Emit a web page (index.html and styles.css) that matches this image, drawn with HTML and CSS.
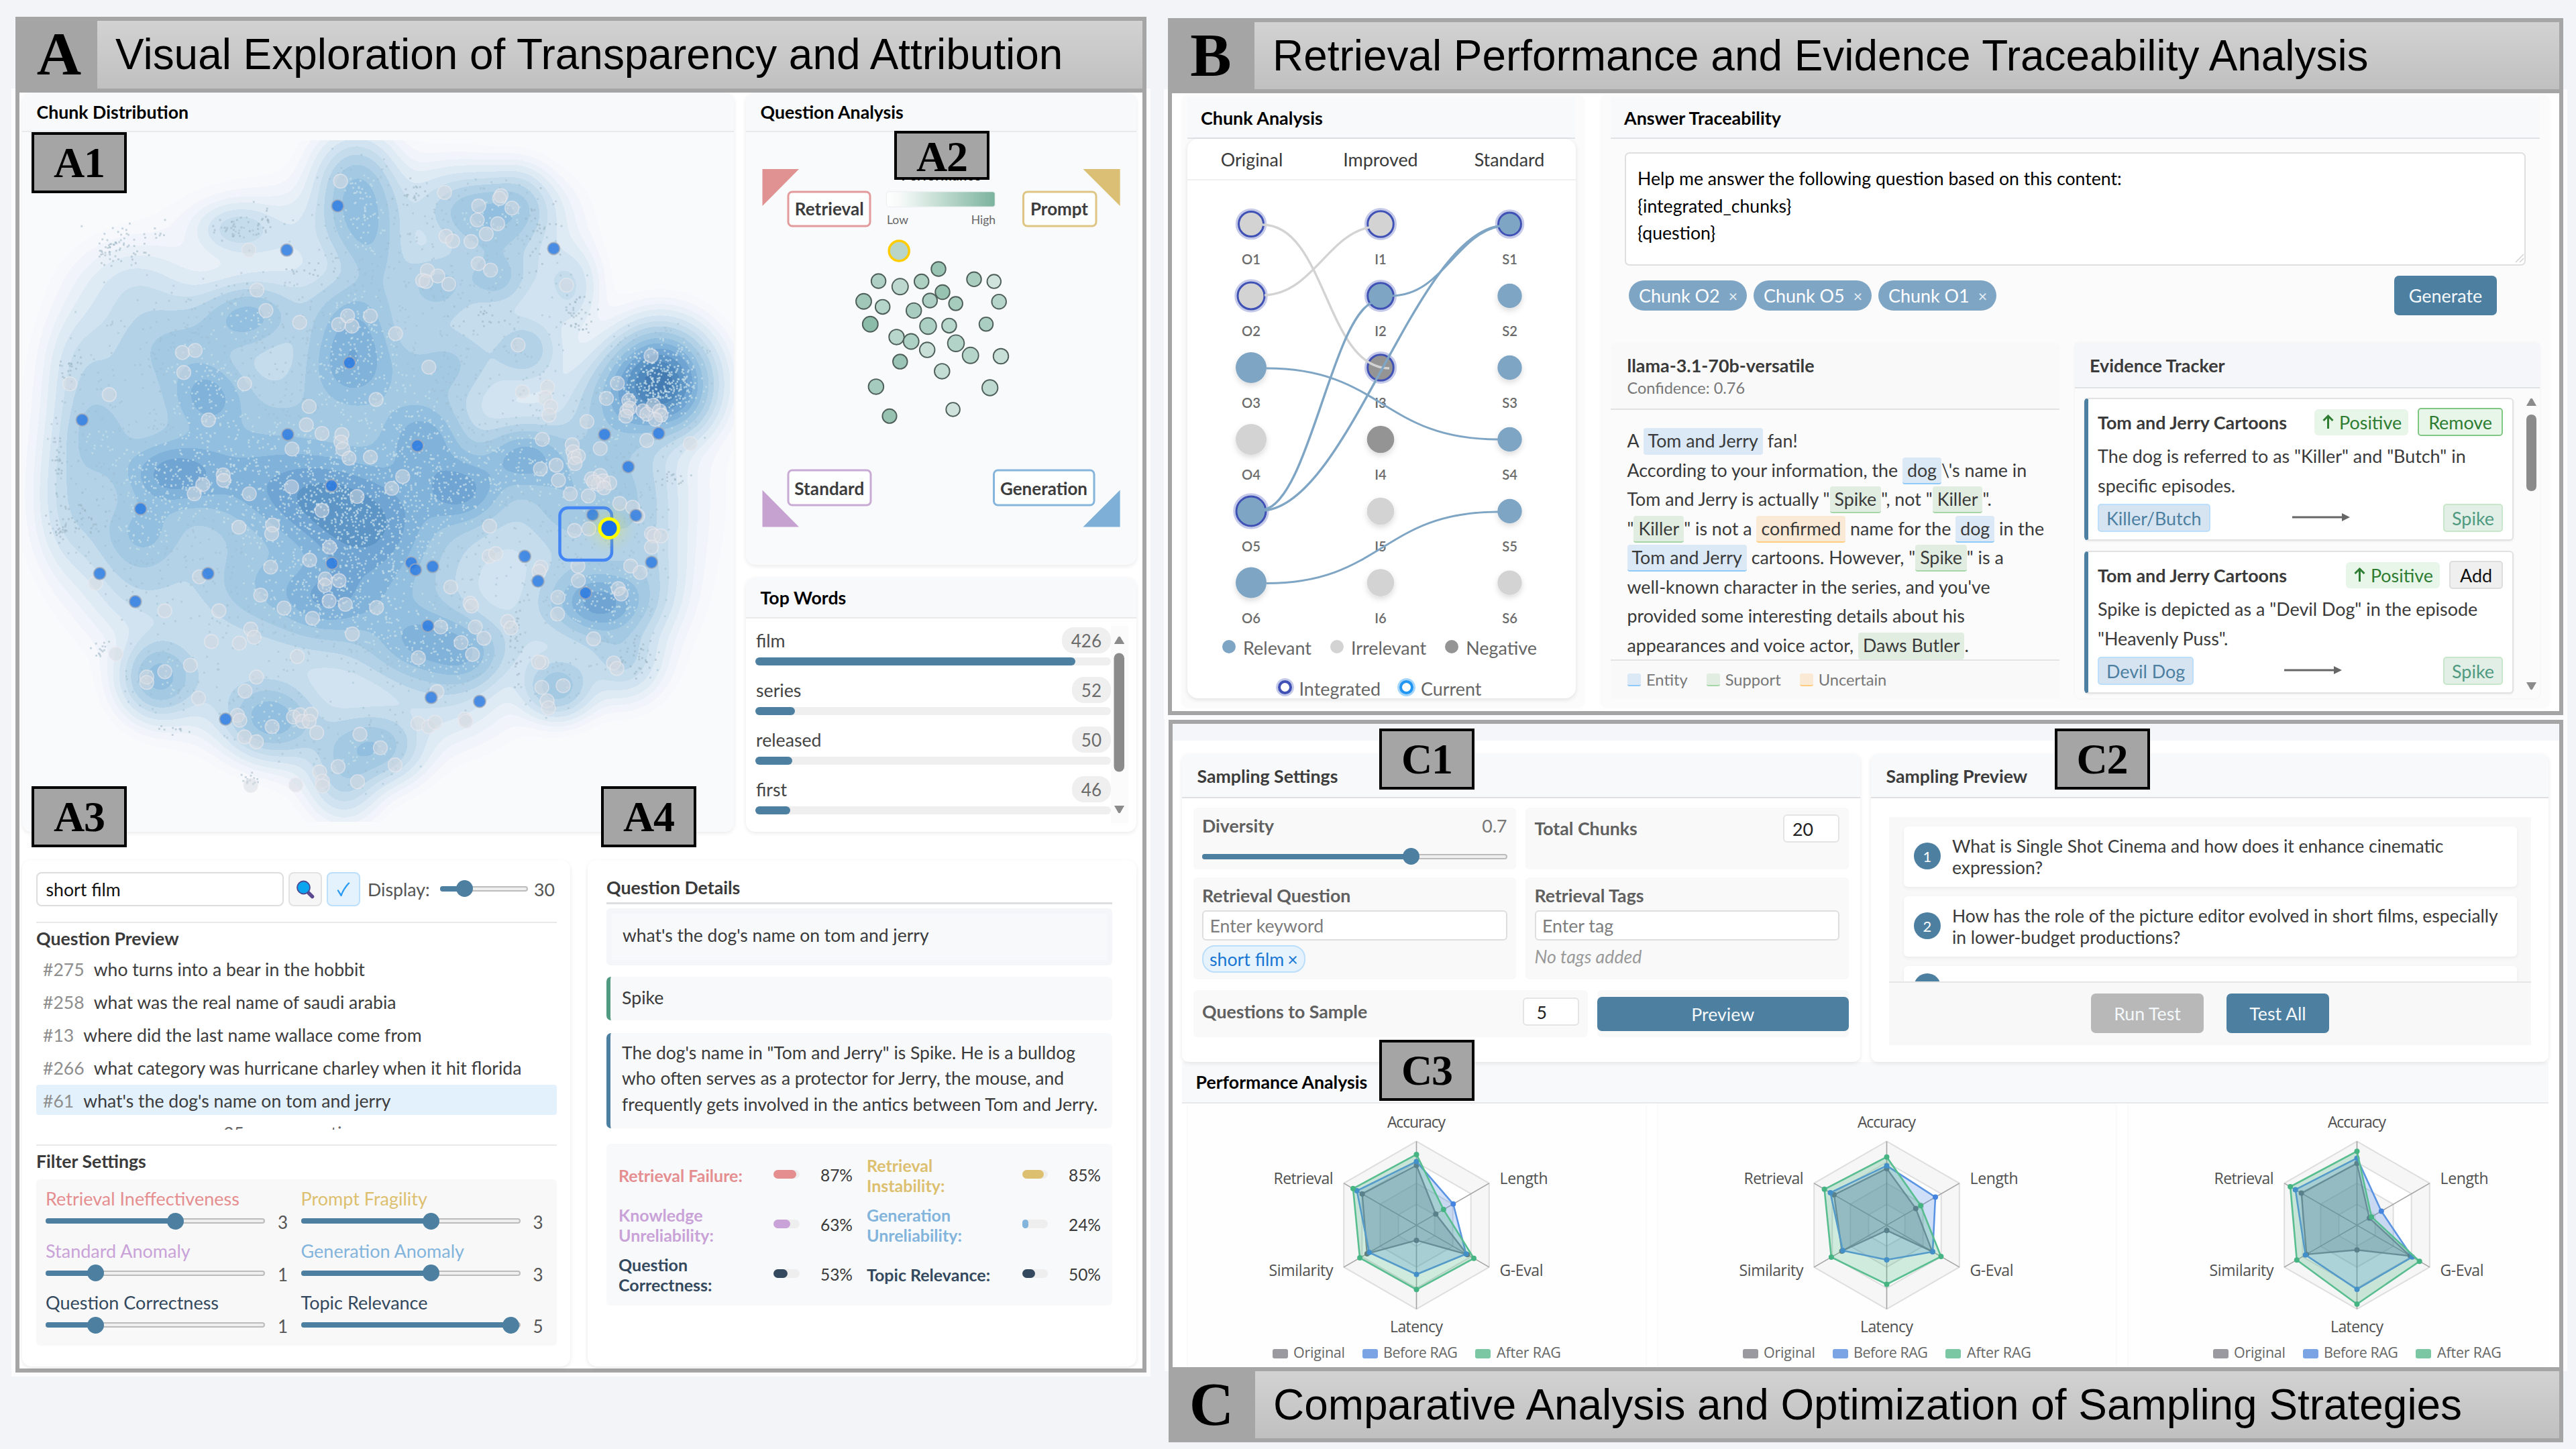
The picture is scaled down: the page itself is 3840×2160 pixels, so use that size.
FILE: index.html
```html
<!DOCTYPE html>
<html lang="en">
<head>
<meta charset="utf-8">
<title>RAG Visual Analytics</title>
<link rel="stylesheet" href="styles.css">
</head>
<body>
<main class="page">

<section class="panel panel-a">
  <header class="bar"><div class="bar-letter">A</div><h1 class="bar-title">Visual Exploration of Transparency and Attribution</h1></header>
  <div class="panel-body a-body">
    <div class="a-top">
      <div class="card chunk-card">
        <h2 class="card-head">Chunk Distribution</h2>
        <canvas id="density" class="density" width="1061" height="1043"></canvas>
      </div>
      <div class="a-side">
        <div class="card qa-card">
          <h2 class="card-head">Question Analysis</h2>
          <svg class="qa-plot" viewBox="1112 197 582 645">
            <defs><linearGradient id="perf"><stop offset="0" stop-color="#fff"/><stop offset=".15" stop-color="#f3f8f6"/><stop offset="1" stop-color="#7bb39d"/></linearGradient></defs>
            <path d="M1136.5 252H1191L1136.5 307Z" fill="#e09191"/>
            <path d="M1614.5 252H1669.6V307Z" fill="#dbbf74"/>
            <path d="M1136.5 730.6V785.4H1191Z" fill="#c5a2d0"/>
            <path d="M1669.6 730.6V785.4H1614.5Z" fill="#7eafd6"/>
            <g fill="#fdfefe" stroke-width="3">
              <rect x="1175" y="286" width="122" height="51" rx="6" stroke="#e39a9a"/>
              <rect x="1525.5" y="286" width="108.5" height="51" rx="6" stroke="#dfc583"/>
              <rect x="1175" y="701" width="123" height="52" rx="6" stroke="#c9aad4"/>
              <rect x="1481.5" y="701" width="149.5" height="52" rx="6" stroke="#86b5db"/>
            </g>
            <g class="corner-label" text-anchor="middle">
              <text x="1236.3" y="321" textLength="103">Retrieval</text>
              <text x="1579" y="321" textLength="86">Prompt</text>
              <text x="1236.3" y="737.5" textLength="104">Standard</text>
              <text x="1556" y="737.5" textLength="130">Generation</text>
            </g>
            <text class="perf-label" x="1403" y="269" text-anchor="middle" textLength="119">Performance</text>
            <rect x="1321.5" y="285.5" width="162" height="23" rx="4" fill="url(#perf)" stroke="#eef1f2" stroke-width="1.5"/>
            <text class="perf-tick" x="1322" y="334">Low</text>
            <text class="perf-tick" x="1484" y="334" text-anchor="end">High</text>
            <g id="questions"></g>
          </svg>
        </div>
        <div class="card words-card">
          <h2 class="card-head">Top Words</h2>
          <div class="words">
            <div class="word-list">
              <div class="word"><div class="word-row"><span>film</span><span class="pill">426</span></div><div class="meter"><i style="width:477px"></i></div></div>
              <div class="word"><div class="word-row"><span>series</span><span class="pill">52</span></div><div class="meter"><i style="width:59px"></i></div></div>
              <div class="word"><div class="word-row"><span>released</span><span class="pill">50</span></div><div class="meter"><i style="width:55px"></i></div></div>
              <div class="word"><div class="word-row"><span>first</span><span class="pill">46</span></div><div class="meter"><i style="width:52px"></i></div></div>
            </div>
            <svg class="word-scroll" viewBox="0 0 26 294"><rect width="26" height="294" fill="#fbfbfb"/><path d="M5 26.5L11 16.5Q12.500 15 14 16.500L20 26.500Q20 27 19 27H6Q5 27 5 26.500Z" fill="#8b8b8b"/><rect x="4.500" y="40.500" width="15.500" height="177" rx="7.700" fill="#8b8b8b"/><path d="M5 268H20L14 278.500Q12.500 280 11 278.500Z" fill="#8b8b8b"/></svg>
          </div>
        </div>
      </div>
    </div>
    <div class="a-bottom">
      <div class="card filter-card">
        <div class="search-row">
          <div class="search-input">short film</div>
          <div class="icon-btn"><svg width="30" height="30" viewBox="0 0 30 30"><path d="M18 18L25.500 25.500" stroke="#5b4a8f" stroke-width="5.500" stroke-linecap="round"/><circle cx="12.500" cy="12" r="9.500" fill="#0ba4ee" stroke="#4b4a93" stroke-width="1.800"/></svg></div>
          <div class="icon-btn check"><svg width="24" height="26" viewBox="0 0 24 26"><path d="M4 14.500L8.500 22Q12 12 20 3.500" fill="none" stroke="#2b9cf2" stroke-width="2.400" stroke-linecap="round" stroke-linejoin="round"/></svg></div>
          <span class="display-label">Display:</span>
          <div class="slider display-slider"><i style="width:27%"></i><b style="left:27%"></b></div>
          <span class="display-value">30</span>
        </div>
        <h3 class="sub-title preview-title">Question Preview</h3>
        <div class="q-list">
          <div class="q-row"><span>#275</span>who turns into a bear in the hobbit</div>
          <div class="q-row"><span>#258</span>what was the real name of saudi arabia</div>
          <div class="q-row"><span>#13</span>where did the last name wallace come from</div>
          <div class="q-row"><span>#266</span>what category was hurricane charley when it hit florida</div>
          <div class="q-row active"><span>#61</span>what's the dog's name on tom and jerry</div>
          <div class="q-row more">25 more questions</div>
        </div>
        <h3 class="sub-title filter-title">Filter Settings</h3>
        <div class="filters">
          <div class="filter"><div class="c-red">Retrieval Ineffectiveness</div><div class="filter-ctl"><div class="slider"><i style="width:59.3%"></i><b style="left:59.3%"></b></div><span>3</span></div></div>
          <div class="filter"><div class="c-gold">Prompt Fragility</div><div class="filter-ctl"><div class="slider"><i style="width:59.3%"></i><b style="left:59.3%"></b></div><span>3</span></div></div>
          <div class="filter"><div class="c-purple">Standard Anomaly</div><div class="filter-ctl"><div class="slider"><i style="width:22.3%"></i><b style="left:22.3%"></b></div><span>1</span></div></div>
          <div class="filter"><div class="c-blue">Generation Anomaly</div><div class="filter-ctl"><div class="slider"><i style="width:59.3%"></i><b style="left:59.3%"></b></div><span>3</span></div></div>
          <div class="filter"><div class="c-navy">Question Correctness</div><div class="filter-ctl"><div class="slider"><i style="width:22.3%"></i><b style="left:22.3%"></b></div><span>1</span></div></div>
          <div class="filter"><div class="c-navy">Topic Relevance</div><div class="filter-ctl"><div class="slider"><i style="width:96.2%"></i><b style="left:96.2%"></b></div><span>5</span></div></div>
        </div>
      </div>
      <div class="card details-card">
        <h3 class="details-title">Question Details</h3>
        <div class="detail-q">what's the dog's name on tom and jerry</div>
        <div class="detail-a">Spike</div>
        <div class="detail-long">The dog's name in "Tom and Jerry" is Spike. He is a bulldog<br>who often serves as a protector for Jerry, the mouse, and<br>frequently gets involved in the antics between Tom and Jerry.</div>
        <div class="metrics">
          <b class="c-red">Retrieval Failure:</b><div class="mini c-red"><i style="width:87%"></i></div><span>87%</span>
          <b class="c-gold second">Retrieval<br>Instability:</b><div class="mini c-gold"><i style="width:85%"></i></div><span>85%</span>
          <b class="c-purple">Knowledge<br>Unreliability:</b><div class="mini c-purple"><i style="width:63%"></i></div><span>63%</span>
          <b class="c-blue second">Generation<br>Unreliability:</b><div class="mini c-blue"><i style="width:24%"></i></div><span>24%</span>
          <b class="c-navy">Question<br>Correctness:</b><div class="mini c-navy"><i style="width:53%"></i></div><span>53%</span>
          <b class="c-navy second">Topic Relevance:</b><div class="mini c-navy"><i style="width:50%"></i></div><span>50%</span>
        </div>
      </div>
    </div>
    <div class="tag tag-a1">A1</div>
    <div class="tag tag-a2">A2</div>
    <div class="tag tag-a3">A3</div>
    <div class="tag tag-a4">A4</div>
  </div>
</section>

<div class="right">
<section class="panel panel-b">
  <header class="bar wide"><div class="bar-letter">B</div><h1 class="bar-title">Retrieval Performance and Evidence Traceability Analysis</h1></header>
  <div class="panel-body b-body">
    <div class="chunks">
      <h2 class="b-head">Chunk Analysis</h2>
      <div class="flow-card">
        <div class="flow-heads"><span>Original</span><span>Improved</span><span>Standard</span></div>
        <svg class="flow" viewBox="1770 269 580 671" id="flow"></svg>
        <div class="legend"><span><i class="dot rel"></i>Relevant</span><span><i class="dot irr"></i>Irrelevant</span><span><i class="dot neg"></i>Negative</span></div>
        <div class="legend rings"><span><i class="ring"></i>Integrated</span><span><i class="ring cur"></i>Current</span></div>
      </div>
    </div>
    <div class="trace">
      <h2 class="b-head">Answer Traceability</h2>
      <div class="prompt">Help me answer the following question based on this content:<br>{integrated_chunks}<br>{question}<svg class="grip" width="14" height="14" viewBox="0 0 14 14"><path d="M1 13L13 1M7 13L13 7" stroke="#ccc" stroke-width="1.200"/></svg></div>
      <div class="chip-row">
        <span class="chip">Chunk O2<em>×</em></span><span class="chip">Chunk O5<em>×</em></span><span class="chip">Chunk O1<em>×</em></span>
        <span class="btn generate">Generate</span>
      </div>
      <div class="trace-low">
        <div class="model">
          <div class="model-head"><h3>llama-3.1-70b-versatile</h3><p>Confidence: 0.76</p></div>
          <div class="answer">A <mark class="ent plain">Tom and Jerry</mark> fan!<br>According to your information, the <mark class="ent">dog</mark>\'s name in<br>Tom and Jerry is actually "<mark class="sup">Spike</mark>", not "<mark class="sup">Killer</mark>".<br>"<mark class="sup">Killer</mark>" is not a <mark class="unc">confirmed</mark> name for the <mark class="ent">dog</mark> in the<br><mark class="ent">Tom and Jerry</mark> cartoons. However, "<mark class="sup">Spike</mark>" is a<br>well-known character in the series, and you've<br>provided some interesting details about his<br>appearances and voice actor, <mark class="sup plain">Daws Butler</mark>.</div>
          <div class="keys"><span><i class="k-ent"></i>Entity</span><span><i class="k-sup"></i>Support</span><span><i class="k-unc"></i>Uncertain</span></div>
        </div>
        <div class="evidence">
          <h3 class="ev-head">Evidence Tracker</h3>
          <div class="ev-main">
            <div class="ev-list">
              <div class="ev-card">
                <div class="ev-top"><b>Tom and Jerry Cartoons</b><span class="pos"><svg width="17" height="22" viewBox="0 0 17 22"><path d="M8.500 21V2.500M1.500 9L8.500 2L15.500 9" fill="none" stroke="#2e7d32" stroke-width="3"/></svg>Positive</span><span class="act remove">Remove</span></div>
                <p>The dog is referred to as "Killer" and "Butch" in<br>specific episodes.</p>
                <div class="ev-tags"><span class="t-ent">Killer/Butch</span><svg width="86" height="14" viewBox="0 0 86 14"><path d="M0 7H76" stroke="#666" stroke-width="3"/><path d="M74 1L86 7L74 13Z" fill="#666"/></svg><span class="t-sup">Spike</span></div>
              </div>
              <div class="ev-card">
                <div class="ev-top"><b>Tom and Jerry Cartoons</b><span class="pos"><svg width="17" height="22" viewBox="0 0 17 22"><path d="M8.500 21V2.500M1.500 9L8.500 2L15.500 9" fill="none" stroke="#2e7d32" stroke-width="3"/></svg>Positive</span><span class="act">Add</span></div>
                <p>Spike is depicted as a "Devil Dog" in the episode<br>"Heavenly Puss".</p>
                <div class="ev-tags"><span class="t-ent">Devil Dog</span><svg width="86" height="14" viewBox="0 0 86 14"><path d="M0 7H76" stroke="#666" stroke-width="3"/><path d="M74 1L86 7L74 13Z" fill="#666"/></svg><span class="t-sup">Spike</span></div>
              </div>
            </div>
            <svg class="ev-scroll" viewBox="0 0 15 440" width="15" height="440"><path d="M0 12L6 1.500Q7.500 0 9 1.500L15 12Z" fill="#8b8b8b"/><rect y="25" width="15" height="114" rx="7" fill="#8b8b8b"/><path d="M0 424H15L9 434.500Q7.500 436 6 434.500Z" fill="#8b8b8b"/></svg>
          </div>
        </div>
      </div>
    </div>
  </div>
</section>

<section class="panel panel-c">
  <div class="panel-body c-body">
    <div class="c-strip"></div>
    <div class="c-cards">
      <div class="card c-card">
        <h2 class="c-head">Sampling Settings</h2>
        <div class="settings">
          <div class="set diversity"><div class="set-line"><b>Diversity</b><span>0.7</span></div><div class="set-slide"><div class="slider"><i style="width:68.600%"></i><b style="left:68.600%"></b></div></div></div>
          <div class="set total"><div class="num-line"><b>Total Chunks</b><span class="num">20</span></div></div>
          <div class="set"><b class="set-label">Retrieval Question</b><div class="field">Enter keyword</div><div class="kw">short film<em>×</em></div></div>
          <div class="set"><b class="set-label">Retrieval Tags</b><div class="field">Enter tag</div><div class="none">No tags added</div></div>
        </div>
        <div class="sample-row">
          <div class="set sample"><b>Questions to Sample</b><span class="num five">5</span></div>
          <div class="set preview"><div class="btn">Preview</div></div>
        </div>
      </div>
      <div class="card c-card">
        <h2 class="c-head">Sampling Preview</h2>
        <div class="samples">
          <div class="sample-list">
            <div class="s-item"><i>1</i><p>What is Single Shot Cinema and how does it enhance cinematic<br>expression?</p></div>
            <div class="s-item"><i>2</i><p>How has the role of the picture editor evolved in short films, especially<br>in lower-budget productions?</p></div>
            <div class="s-item last"><i></i></div>
          </div>
          <div class="s-actions"><span class="btn off">Run Test</span><span class="btn">Test All</span></div>
        </div>
      </div>
    </div>
    <h2 class="perf-head">Performance Analysis</h2>
    <div class="radars" id="radars"></div>
    <div class="tag tag-c1">C1</div>
    <div class="tag tag-c2">C2</div>
    <div class="tag tag-c3">C3</div>
  </div>
  <footer class="bar wide"><div class="bar-letter">C</div><h1 class="bar-title">Comparative Analysis and Optimization of Sampling Strategies</h1></footer>
</section>
</div>
</main>
<script src="charts.js"></script>
</body>
</html>
```
FILE: charts.js
```js
// ---------- Chunk distribution: density contours, chunks and questions ----------
(function () {
  const cv = document.getElementById('density');
  const ctx = cv.getContext('2d');
  const W = cv.width, H = cv.height, OX = 33, OY = 197;

  // kernel centres: x, y, sx, sy, weight
  const K = [
    // plateau under the main body
    [470,700,150,110,.2],[300,660,110,100,.16],[620,760,120,110,.12],[860,720,100,90,.12],[520,900,140,80,.14],[900,850,70,70,.1],
    [530,270,38,44,.3],[540,330,36,44,.26],[564,390,34,40,.16],
    [735,318,56,36,.36],[660,300,50,40,.1],[775,290,26,30,.08],[745,400,60,44,.18],[645,428,36,34,.24],[740,415,26,24,.14],
    [440,350,100,44,.1],[352,340,34,22,.14],[450,440,60,34,.06],
    [200,425,52,40,.1],[370,472,44,32,.36],[268,515,56,50,.22],[180,520,50,60,.1],
    [310,590,38,34,.3],[120,560,32,60,.12],[150,650,34,44,.22],[105,730,30,70,.14],[150,780,50,50,.08],
    [250,705,46,32,.42],[340,715,60,50,.16],[215,790,38,34,.2],
    [522,540,46,44,.42],[530,470,46,40,.3],[470,740,64,44,.38],[540,790,60,44,.36],[430,640,60,60,.06],[600,600,60,60,.12],
    [635,655,38,36,.3],[690,730,40,34,.42],[600,740,60,50,.1],[780,680,38,30,.38],[670,540,50,40,.22],
    [985,560,44,44,.86],[935,590,46,42,.26],[1010,600,36,36,.18],[900,640,50,50,.12],
    [785,520,34,34,.24],[700,460,50,50,.06],[850,430,26,40,.14],
    [850,740,46,50,.2],[950,740,42,60,.16],
    [895,900,44,30,.46],[860,880,50,40,.1],[965,860,34,50,.12],
    [830,1025,32,28,.34],[930,985,34,36,.18],[880,960,60,40,.08],[780,940,34,40,.06],
    [480,895,50,38,.34],[570,870,60,50,.16],[380,870,50,50,.18],[640,960,60,38,.4],[700,980,34,30,.2],
    [235,1010,34,36,.4],[200,850,50,60,.16],[290,900,60,70,.08],
    [402,1072,40,34,.42],[320,1030,50,44,.1],[430,1000,80,40,.06],
    [565,1115,40,32,.28],[512,1165,32,36,.2],[500,1100,60,40,.16],[660,1040,60,44,.12]
  ];
  const stops = [
    [.012,'#f6f8fc'],[.025,'#f1f5fb'],[.045,'#e9f0f8'],[.07,'#deeaf4'],[.11,'#d1e3f0'],[.16,'#c4dcec'],
    [.22,'#b3d2e7'],[.3,'#a3c9e3'],[.4,'#92bfdf'],[.5,'#80b2da'],[.61,'#6fa4d3'],[.74,'#5d95c7'],[.88,'#4f88bd'],[1.0,'#437bb2']
  ].map(([v, c]) => [v, parseInt(c.slice(1, 3), 16), parseInt(c.slice(3, 5), 16), parseInt(c.slice(5, 7), 16)]);

  const density = (x, y) => {
    let d = 0;
    for (const k of K) {
      const a = (x - k[0]) / k[2], b = (y - k[1]) / k[3], q = a * a + b * b;
      if (q < 16) d += k[4] * Math.exp(-q / 2);
    }
    return d;
  };

  const S = 4, gw = Math.ceil(W / S) + 2, gh = Math.ceil(H / S) + 2;
  const grid = new Float32Array(gw * gh);
  for (let j = 0; j < gh; j++) for (let i = 0; i < gw; i++) grid[j * gw + i] = density(OX + i * S, OY + j * S);

  const img = ctx.createImageData(W, H);
  for (let y = 0; y < H; y++) for (let x = 0; x < W; x++) {
    const gx = x / S, gy = y / S, i = gx | 0, j = gy | 0, fx = gx - i, fy = gy - j, p = j * gw + i;
    const v = (grid[p] * (1 - fx) + grid[p + 1] * fx) * (1 - fy) + (grid[p + gw] * (1 - fx) + grid[p + gw + 1] * fx) * fy;
    let c = [0, 248, 250, 252];
    for (const s of stops) { if (v >= s[0]) c = s; else break; }
    if (y < 12 || y > 1027) c = [0, 248, 250, 252];
    const o = (y * W + x) * 4;
    img.data[o] = c[1]; img.data[o + 1] = c[2]; img.data[o + 2] = c[3]; img.data[o + 3] = 255;
  }
  ctx.putImageData(img, 0, 0);
  ctx.translate(-OX, -OY);

  let seed = 7;
  const rnd = () => (seed = (seed * 16807) % 2147483647) / 2147483647;
  const gauss = () => Math.sqrt(-2 * Math.log(rnd())) * Math.cos(6.28318 * rnd());

  // individual chunks are sampled from the density itself
  for (let m = 0; m < 46000; m++) {
    const x = 60 + rnd() * 1000, y = 212 + rnd() * 1000, d = density(x, y);
    if (d < .08 || rnd() > Math.pow(d, 1.7) * .85) continue;
    ctx.fillStyle = d > .34 ? 'rgba(196,221,232,.75)' : 'rgba(160,190,208,.5)';
    ctx.fillRect(x, y, 2.7, 2.7);
  }
  ctx.fillStyle = 'rgba(150,175,190,.5)';
  for (const [cx, cy, sx, sy, n] of [[190,360,30,14,50],[160,375,14,10,25],[350,340,20,8,30],[393,330,6,10,14],[105,545,8,10,20],[85,690,5,30,24],[90,790,8,10,22],[118,775,20,16,34],[1005,712,12,8,16],[610,285,16,10,20],[375,1160,8,5,14],[860,465,12,18,40],[455,400,20,8,14],[720,470,30,12,20],[150,965,8,8,14],[950,985,14,20,34],[770,955,8,30,30],[260,1085,14,5,10],[795,355,20,30,30]])
    for (let m = 0; m < n; m++) ctx.fillRect(cx + gauss() * sx, cy + gauss() * sy, 2.8, 2.8);

  const X = v => v * .7079, Y = v => v * .8036;
  const grey = [717,336,524,464,541,538,560,576,631,598,713,602,732,586,741,605,780,586,833,619,792,741,651,754,645,788,678,804,720,806,718,820,722,833,735,850,780,848,848,884,825,906,752,921,615,833,614,903,525,916,470,881,471,891,427,899,409,916,384,654,411,650,387,691,439,779,515,712,147,712,230,732,678,947,574,974,572,990,503,978,694,1015,652,1039,570,1052,549,1104,598,1128,658,1147,685,1074,684,1086,714,1077,693,1115,727,1121,793,1127,742,1176,626,1218,540,1256,516,1282,504,1193,528,1167,535,1182,461,1133,445,1190,420,1070,201,1082,347,1133,244,1213,401,1234,347,1246,309,1256,309,1266,418,1295,500,1327,505,1336,515,1367,540,1376,573,1348,618,1330,632,1326,637,1338,655,1325,651,1338,667,1359,528,1457,623,1456,673,1432,679,1449,679,1458,712,1422,753,1450,758,1362,801,1387,832,1419,880,1342,903,1348,916,1340,979,1334,981,1338,920,1283,881,1220,995,1214,971,1192,1001,1163,1019,1184,928,1163,949,1089,990,1119,993,1124,1031,976,1030,1032,1044,1027,936,357,1008,382,1055,363,1052,368,1078,386,1005,408,1048,415,1024,434,992,448,939,438,953,447,1007,489,1033,501,900,502,890,520,897,522,922,512,945,527,1193,529,903,681,1091,640,1100,727,1153,718,1148,738,1160,754,1156,770,1142,815,1138,870,1171,863,1176,891,1205,825,1207,838,1210,849,1218,846,1211,860,1201,916,1236,782,1277,739,1264,832,1300,711,1324,743,1320,762,1326,757,1318,772,1354,762,1362,768,1376,752,1389,762,1392,770,1380,778,1362,817,1371,660,1454,823,1246,888,1264,882,1270,892,1260,898,1284,896,1250,894,1272,905,1239,920,1305,934,1332,941,1343,957,1210,984,1240,981,1217,1050,1218,1077,1139,1052,1135,1060,1175,1108,1174,1139,1141,1229,1134,1228,1141,1275,1186,1272,1152,1300,1155,1313,1250,1185,1292,1230,1299,1240,1302,1092,1308,1102,1328,1050,1348,1062,1372,990,1377,994,1392,994,1372,1015,1069,1153,1076,1165];
  ctx.lineWidth = 1.6;
  for (let i = 0; i < grey.length; i += 2) {
    ctx.beginPath(); ctx.arc(X(grey[i]), Y(grey[i + 1]), 10.4, 0, 7);
    ctx.fillStyle = 'rgba(214,218,224,.52)'; ctx.fill();
    ctx.strokeStyle = 'rgba(235,234,238,.6)'; ctx.stroke();
  }
  const blue = [711,382,604,464,1166,461,736,673,606,806,879,827,698,901,173,779,296,944,210,1064,285,1116,438,1064,475,1334,699,1045,866,1044,875,1057,911,1051,901,1161,908,1294,1010,1301,1105,1032,1133,1078,1233,1100,1372,1043,1339,956,1323,866,1273,806,1387,804,1248,955];
  for (let i = 0; i < blue.length; i += 2) {
    ctx.beginPath(); ctx.arc(X(blue[i]), Y(blue[i + 1]), 9, 0, 7);
    ctx.fillStyle = 'rgba(42,121,224,.82)'; ctx.fill();
    ctx.strokeStyle = 'rgba(160,170,185,.8)'; ctx.lineWidth = 2; ctx.stroke();
  }
  ctx.strokeStyle = '#4285f4'; ctx.lineWidth = 4.5;
  ctx.beginPath(); ctx.roundRect(834.5, 757, 77.5, 78, 12); ctx.stroke();
  ctx.save();
  ctx.shadowColor = 'rgba(255,240,0,.9)'; ctx.shadowBlur = 22;
  ctx.beginPath(); ctx.arc(908, 787.5, 14, 0, 7); ctx.strokeStyle = '#ff0'; ctx.lineWidth = 5; ctx.stroke();
  ctx.restore();
  ctx.beginPath(); ctx.arc(908, 787.5, 11.5, 0, 7); ctx.fillStyle = '#1a6fe6'; ctx.fill();
})();

// ---------- Question analysis scatter ----------
(function () {
  const pts = [[1399,401,'#99c3b3'],[1309.6,419,'#aed0c4'],[1341.8,427.3,'#bdd8cf',12],[1373.7,419.6,'#add0c3'],[1452,416.3,'#a9cdbf'],[1481.8,419.6,'#d0e3dc',10.3],[1405,435.5,'#97c2b1'],[1287.5,449.2,'#a0c7b8',11.5],[1315.7,457.4,'#b6d5ca'],[1386.3,448,'#adcfc3'],[1424.7,452.5,'#a6ccbe',10.3],[1489.2,449.7,'#b6d5ca'],[1362.2,462.9,'#a8cdc0',11.3],[1297.3,483.2,'#8bbba9',11.5],[1383.5,486,'#accfc3',12.3],[1414.9,485.4,'#b7d6cc'],[1470,483.2,'#aacec1',10.3],[1336.5,502.4,'#b9d6cc',11.3],[1358.2,509,'#aed1c5',11.5],[1382.2,521.6,'#c8dfd7',11.3],[1425,511.7,'#b2d3c8',12.3],[1446.7,529.8,'#b6d5ca',12],[1492,531,'#c7dfd7',11.3],[1341.8,539.1,'#9ac4b5'],[1404.3,553.4,'#c3dcd4',11.3],[1305.9,576.4,'#a5cbbe',11.3],[1475.7,578,'#bdd9d0',11.7],[1326,620.3,'#97c2b2',10.6],[1420.6,610.4,'#cfe3dc',10.3]];
  let s = '<circle cx="1340.200" cy="374" r="15" fill="#b9d5ca" stroke="#fc0" stroke-width="3.500"/>';
  for (const [x, y, c, r = 10.8] of pts) s += `<circle cx="${x}" cy="${y}" r="${r}" fill="${c}" stroke="#4e5e58" stroke-width="1.900"/>`;
  document.getElementById('questions').innerHTML = s;
})();

// ---------- Chunk flow ----------
(function () {
  const xs = [1865, 2058, 2250.5], pre = ['O', 'I', 'S'], radii = [23, 20.3, 18.2];
  const Yn = [334, 441, 548, 655, 762, 868.6];
  const col = { r: '#7fa5c5', i: '#d3d3d3', n: '#949494' };
  const kinds = ['iirirr', 'irnnii', 'rrrrri'];
  const ringed = { O1: 18.5, O2: 20, O5: 22, I1: 19.3, I2: 19.3, I3: 19.3, S1: 17 };
  let s = '<defs><filter id="sh" x="-30%" y="-30%" width="160%" height="170%"><feDropShadow dx="0" dy="4" stdDeviation="4" flood-opacity=".14"/></filter></defs>';
  kinds.forEach((ks, c) => [...ks].forEach((k, r) => {
    const id = pre[c] + (r + 1), R = ringed[id];
    if (R) {
      s += `<circle cx="${xs[c]}" cy="${Yn[r]}" r="${R + 3}" fill="#fff" stroke="#c5cae9" stroke-width="3.500"/>`;
      s += `<circle cx="${xs[c]}" cy="${Yn[r]}" r="${R}" fill="${col[k]}" stroke="#3f51b5" stroke-width="3"/>`;
    } else s += `<circle cx="${xs[c]}" cy="${Yn[r]}" r="${radii[c]}" fill="${col[k]}" filter="url(#sh)"/>`;
    s += `<text x="${xs[c]}" y="${Yn[r] + 60}" text-anchor="middle">${id}</text>`;
  }));
  const curve = (a, b, x2, y2, color, w) => { const m = (a + x2) / 2; return `<path d="M${a} ${b}C${m} ${b} ${m} ${y2} ${x2} ${y2}" fill="none" stroke="${color}" stroke-width="${w}"/>`; };
  s += curve(1882, 335, 2071, 549, '#d3d3d3', 3.4);
  s += `<path d="M1885 440C1955 438 1980 350 2041 339" fill="none" stroke="#d3d3d3" stroke-width="3.400"/>`;
  s += curve(1888, 549, 2233, 655, '#7fa5c5', 3);
  s += `<path d="M1884 760C1950 747 1985 480 2045 451" fill="none" stroke="#7fa5c5" stroke-width="3.400"/>`;
  s += `<path d="M1884 761C2010 752 2110 350 2236 337" fill="none" stroke="#7fa5c5" stroke-width="3.400"/>`;
  s += `<path d="M2074 441C2150 440 2170 350 2236 337" fill="none" stroke="#7fa5c5" stroke-width="3"/>`;
  s += curve(1888, 869.5, 2233, 763, '#7fa5c5', 3);
  document.getElementById('flow').innerHTML = s;
})();

// ---------- Performance radars ----------
(function () {
  // order: Accuracy, Retrieval, Similarity, Latency, G-Eval, Length
  const data = [
    { o: [.714,.747,.68,.18,.70,.266], b: [.76,.82,.65,.587,.684,.506], a: [.844,.873,.78,.767,.79,.373] },
    { o: [.676,.725,.618,.062,.627,.4], b: [.71,.776,.605,.413,.633,.67], a: [.814,.858,.763,.705,.747,.468] },
    { o: [.737,.766,.696,.295,.734,.171], b: [.80,.848,.709,.764,.759,.335], a: [.882,.918,.829,.941,.861,.2] }
  ];
  const cx = 340.5, cy = 181.4, R = 125;
  const pt = (i, v) => { const t = -Math.PI / 2 - i * Math.PI / 3; return [(cx + R * v * Math.cos(t)).toFixed(1), (cy + R * v * Math.sin(t)).toFixed(1)]; };
  const poly = vs => vs.map((v, i) => pt(i, v).join(',')).join(' ');
  const out = data.map(d => {
    let s = '';
    [[1,'#f6f6f6'],[.75,'#fff'],[.5,'#f6f6f6'],[.25,'#fff']].forEach(([v, f]) => { s += `<polygon points="${poly(Array(6).fill(v))}" fill="${f}" stroke="#dedede" stroke-width="2"/>`; });
    for (let i = 0; i < 6; i++) { const p = pt(i, 1); s += `<path d="M${cx} ${cy}L${p[0]} ${p[1]}" stroke="#a4a4a4" stroke-width="1.600"/>`; }
    const ser = (v, line, fill, w) => {
      s += `<polygon points="${poly(v)}" fill="${fill}" stroke="${line}" stroke-width="${w}" stroke-linejoin="round"/>`;
    };
    const dots = (v, c) => v.forEach((q, i) => { const p = pt(i, q); s += `<circle cx="${p[0]}" cy="${p[1]}" r="4" fill="${c}"/>`; });
    ser(d.o, 'rgba(110,110,118,.8)', 'rgba(110,105,112,.28)', 2.4); dots(d.o, '#6e6e76');
    ser(d.b, '#5b94e3', 'rgba(64,128,224,.25)', 2.6); dots(d.b, '#4585e0');
    ser(d.a, '#58bd8f', 'rgba(63,174,124,.25)', 2.6); dots(d.a, '#45b482');
    s += `<g class="axis"><text x="${cx}" y="36" text-anchor="middle" textLength="87">Accuracy</text><text x="464.500" y="120" textLength="72">Length</text><text x="464.500" y="257" textLength="65">G-Eval</text><text x="${cx}" y="341" text-anchor="middle" textLength="79">Latency</text><text x="216.500" y="120" text-anchor="end" textLength="89">Retrieval</text><text x="216.500" y="257" text-anchor="end" textLength="96">Similarity</text></g>`;
    s += '<g class="key"><rect x="126" y="366" width="23" height="14" rx="3" fill="#99999f"/><text x="157" y="379" textLength="77">Original</text><rect x="260" y="366" width="23" height="14" rx="3" fill="#7ba4e4"/><text x="291" y="379" textLength="111">Before RAG</text><rect x="428" y="366" width="23" height="14" rx="3" fill="#7bc6a3"/><text x="460" y="379" textLength="96">After RAG</text></g>';
    return `<div class="radar"><svg width="682" height="393" viewBox="0 0 682 393">${s}</svg></div>`;
  });
  document.getElementById('radars').innerHTML = out.join('');
})();
```
FILE: styles.css
```css
*{box-sizing:border-box;margin:0;padding:0}
html,body{width:3840px;height:2160px;overflow:hidden}
body{background:#f3f4f8;font-family:Lato,"Liberation Sans",sans-serif;font-size:26.700px;color:#3a3a3a}
h1,h2,h3{font-weight:700;font-size:inherit}
em,i{font-style:normal}
.page{display:flex;align-items:flex-start;gap:32px;padding:25px 0 0 23px}
.panel{position:relative}
.panel-a{width:1686px}
.right{width:2080px;padding-top:2px}

/* title bars */
.bar{position:relative;z-index:1;display:flex;height:113px;border:6px solid #a5a5a5;background:linear-gradient(#d2d2d2,#c0c0c0)}
.bar-letter{width:116px;background:#a5a5a5;font:700 92px/99px "Liberation Serif",serif;color:#000;text-align:center}
.bar.wide .bar-letter{width:123px;padding-right:7px}
.panel-a .bar-letter{padding-left:2px}
.bar-title{padding-left:27px;font:400 63.900px/100px "Liberation Sans",sans-serif;color:#000;white-space:nowrap}
.bar.wide .bar-title{padding-left:27px}
.panel-body{position:relative;border:6px solid #a5a5a5;border-top:0;background:#fff;box-shadow:0 0 0 6px #fcfcfe}

/* overlay tags */
.tag{position:absolute;z-index:3;width:142px;height:91px;border:4px solid #000;background:#a5a5a5;font:700 64px/83px "Liberation Serif",serif;color:#000;text-align:center;letter-spacing:-1px}
.tag-a1{left:18px;top:59px}
.tag-a2{left:1304px;top:57px;height:73px;line-height:69px}
.tag-a3{left:18px;top:1034px}
.tag-a4{left:867px;top:1034px}
.tag-c1{left:308px;top:7px}
.tag-c2{left:1314.500px;top:7px}
.tag-c3{left:308px;top:471px}

/* panel A */
.card{background:#fff;border-radius:14px;box-shadow:0 2px 6px rgba(0,0,0,.09);overflow:hidden}
.a-body{display:flex;flex-direction:column;gap:42px;height:1908px;padding:0 9px 3px 4px}
.a-top{display:grid;grid-template-columns:1061px 1fr;gap:18px;height:1102px}
.a-side{display:flex;flex-direction:column;gap:19px}
.card-head{height:59px;border-bottom:2px solid #e8eaec;background:#f8f9fb;padding-left:21.500px;line-height:58px;color:#000}
.density{display:block}
.qa-card{height:704px;background:#f8fafc}
.qa-plot{display:block;width:582px;height:645px}
.corner-label{font-size:26px;font-weight:700;fill:#3c3c3c}
.perf-label{font-size:20px;font-weight:700;fill:#111}
.perf-tick{font-size:17.500px;fill:#666}
.words-card{height:379px}
.words-card .card-head{height:61px;line-height:60px}
.words{display:flex;padding:13px 0 0 14px}
.word-list{display:flex;flex-direction:column;gap:17px;width:530px}
.word-row{display:flex;justify-content:space-between;height:39px;line-height:41px;padding-left:1px;margin-bottom:6px;color:#444}
.pill{padding:0 14px;border-radius:18px;background:#efefef;color:#6b6b6b;font-size:26px}
.meter{height:12px;border-radius:6px;background:#efefef}
.meter i{display:block;height:12px;border-radius:6px;background:#4d7fa1}
.word-scroll{width:26px;height:294px;margin-top:-2px}

.a-bottom{display:grid;grid-template-columns:817px 1fr;gap:26px;height:755px}
.filter-card{padding:18px 20px 0 21px}
.search-row{display:flex;align-items:center;height:51px;margin-bottom:23px}
.search-input{width:369px;height:51px;border:2.500px solid #ddd;border-radius:8px;padding-left:12.500px;line-height:49px;color:#111}
.icon-btn{display:flex;align-items:center;justify-content:center;width:50px;height:51px;margin-left:7px;border:2.500px solid #e2e2e2;border-radius:8px;background:#f6f6f6}
.icon-btn.check{background:#e3f2fd;border-color:#bcdffb}
.display-label{width:108px;margin-left:11px;color:#555}
.display-value{margin-left:9px;color:#555}
.slider{position:relative;flex:1;height:8px;border:2px solid #bcbcbc;border-radius:4px;background:#efefef}
.slider i{position:absolute;left:-2px;top:-2px;height:8px;border-radius:4px;background:#4d7fa1}
.slider b{position:absolute;top:-10.500px;width:25px;height:25px;margin-left:-12.500px;border-radius:50%;background:#4d7fa1}
.display-slider{flex:none;width:131px;top:-1px}
.sub-title{border-top:2px solid #e9e9eb;line-height:47px}
.preview-title{height:47px}
.q-list{height:263px;overflow:hidden}
.q-row{height:45px;margin-bottom:4px;padding-left:10px;line-height:48px;white-space:nowrap;color:#3c3c3c;border-radius:4px;font-size:26.600px}
.q-row span{margin-right:14px;color:#8e8e8e}
.q-row.active{background:#e3f1fc}
.q-row.more{padding:0;text-align:center;color:#666;line-height:46px}
.filter-title{height:52px;margin-top:22px}
.filters{display:grid;grid-template-columns:380.500px 380.500px;grid-auto-rows:69px;row-gap:8.500px;height:248px;padding:14px 0 0 14px;background:#f8f8f8;border-radius:6px}
.filter{line-height:30px;font-size:27px}
.filter>div:first-child{height:29px}
.filter-ctl{display:flex;align-items:center;height:40px}
.filter-ctl .slider{flex:none;width:327px;top:-1px}
.filter-ctl span{margin-left:19px;font-size:26px;line-height:42px;padding-top:2px;color:#555}
.c-red{color:#e58e90}.c-gold{color:#ddc06f}.c-purple{color:#c9a2d8}.c-blue{color:#82b4dc}.c-navy{color:#34495e}

.details-card{padding:18px 36px 0 28px}
.details-title{height:48px;border-bottom:3px solid #dcdee0;line-height:46px}
.detail-q{height:85px;margin-top:6px;border:8px solid #f5f6fa;border-radius:6px;background:#f8f9fb;padding-left:16px;line-height:65px;font-size:26.500px}
.detail-a{height:65px;margin-top:17px;border-left:6px solid #4f9a80;border-radius:7px;background:#f8f9fb;padding-left:17px;line-height:62px}
.detail-long{height:142px;margin-top:19px;border-left:6px solid #4d7fa1;border-radius:7px;background:#f8f9fb;padding:10px 0 0 17px;line-height:38.300px;white-space:nowrap;font-size:26.500px}
.metrics{display:grid;grid-template-columns:231px 39px 79px 253px 38px 79px;grid-auto-rows:74px;align-items:center;height:241px;margin-top:23px;padding:10px 0 0 18px;border-radius:6px;background:#f8f9fb;font-size:25px;line-height:30px}
.metrics .second{padding-left:21px}
.metrics span{text-align:right;font-size:24.500px}
.mini{height:13px;border-radius:7px;background:#eee;position:relative;top:-2px}
.mini i{display:block;height:13px;border-radius:7px;background:currentColor}

/* panel B */
.right .bar{height:112px}
.b-body{display:flex;gap:25px;height:927px;padding:3px 15px 5px 15px;font-size:26.900px}
.chunks,.trace{background:#fbfbfb;border-radius:10px;box-shadow:0 0 5px rgba(0,0,0,.04)}
.chunks{width:599px;padding:3px 12px 14px 8px}
.b-head{height:62px;border-bottom:2px solid #dfe3e6;background:#f8f9fb;padding-left:20px;line-height:61px;color:#000}
.chunks .b-head{width:578px}
.flow-card{height:834px;border-radius:16px;background:#fff;box-shadow:0 2px 7px rgba(0,0,0,.11)}
.flow-heads{display:grid;grid-template-columns:repeat(3,192px);height:62px;border-bottom:2px solid #f0f0f0;line-height:62px;text-align:center}
.flow{display:block;width:580px;height:671px}
.flow text{font-size:20.200px;font-weight:600;fill:#6b6b6b}
.legend{display:flex;justify-content:center;gap:28px;height:50px;padding-right:6px;line-height:51px;color:#666;margin-bottom:11px}
.legend span{display:flex;align-items:center}
.dot{width:20px;height:20px;margin-right:11px;border-radius:50%;position:relative;top:-1px}
.rel{background:#7fa5c5}.irr{background:#d3d3d3}.neg{background:#949494}
.rings{gap:25px;padding-right:9px}
.ring{width:21px;height:21px;margin:0 11px 0 3px;border:4px solid #3f51b5;border-radius:50%;background:#fff;box-shadow:0 0 0 3px #c5cae9;position:relative;top:-2px}
.ring.cur{border-color:#2196f3;box-shadow:0 0 0 3px #a6d5fa}

.trace{flex:1;padding:3px 14px 14px 15px}
.prompt{position:relative;height:169px;margin:20px 21px 15px;border:2.500px solid #dfdfdf;border-radius:7px;background:#fff;padding:17px;line-height:40.700px;color:#000;font-size:26.650px}
.grip{position:absolute;right:0;bottom:2px}
.chip-row{display:flex;align-items:center;gap:10px;height:59px;padding:0 64px 0 27px}
.chip{display:flex;justify-content:space-between;width:176px;height:45px;padding:0 14px 0 15px;border-radius:23px;background:#7fa5c5;line-height:46px;color:#fff}
.chip em{font-size:23px;color:#e4edf4}
.btn{display:block;border-radius:7px;background:#4d7fa1;color:#f4f8fa;text-align:center}
.generate{width:153px;height:59px;margin-left:auto;line-height:60px}
.trace-low{display:flex;gap:23px;height:530px;margin-top:41px}
.model{width:669px;background:#fbfbfb}
.model-head{height:100px;border-bottom:2px solid #e2e2e2;background:#f9f9f9;padding:14px 0 0 24.500px;border-radius:8px 8px 0 0}
.model-head h3{line-height:39px}
.model-head p{font-size:23.500px;line-height:29px;color:#777}
.answer{height:372px;padding:25px 0 0 24.500px;line-height:43.500px;white-space:nowrap;font-size:26.800px}
mark{padding:3px 7px;border-bottom:2px solid;border-radius:4px;color:inherit}
.ent{background:#dbe9f6;border-color:#90caf9}
.sup{background:#e1ede1;border-color:#a5d6a7}
.unc{background:#fae9d5;border-color:#ffcc80}
mark.plain{border-color:transparent}
.keys{display:flex;gap:28px;height:58px;border-top:2px solid #e4e4e4;background:#f9f9f9;padding-left:25px;line-height:58px;font-size:23.700px;color:#777}
.keys span{display:flex;align-items:center}
.keys i{width:20px;height:19px;margin-right:8px;border-bottom:2px solid;border-radius:3px}
.k-ent{background:#dbe9f6;border-color:#90caf9!important}
.k-sup{background:#e1ede1;border-color:#a5d6a7!important}
.k-unc{background:#fae9d5;border-color:#ffcc80!important}
.evidence{flex:1;border-radius:8px;box-shadow:0 0 4px rgba(0,0,0,.05)}
.ev-head{height:68px;border-bottom:2px solid #e0e2e6;background:#f5f6fa;padding-left:22px;line-height:67px}
.ev-main{display:flex;gap:19px;padding:14px 0 0 14px}
.ev-list{display:flex;flex-direction:column;gap:15px;width:640px}
.ev-card{height:213px;padding:13px 14px 0 14px;border:2px solid #e2e2e2;border-left:6px solid #4d7fa1;border-radius:6px;background:#fff;box-shadow:0 1px 3px rgba(0,0,0,.07)}
.ev-top{display:flex;align-items:center;height:42px;margin-bottom:8px}
.ev-top b{margin-right:auto}
.pos{display:flex;align-items:center;gap:8px;height:39px;margin-right:14px;padding:0 10px 0 12px;border-radius:6px;background:#e8f5e9;color:#2e7d32}
.act{height:42px;padding:0 14px;border:2px solid #ddd;border-radius:5px;background:#efefef;line-height:39px;color:#111}
.act.remove{border-color:#81c784;background:#e8f5e9;color:#2e7d32}
.ev-card p{height:88px;margin-bottom:5px;line-height:43.500px;white-space:nowrap}
.ev-tags{display:flex;justify-content:space-between;align-items:center}
.ev-tags svg{margin-right:16px;position:relative;top:-1px}
.ev-tags span{height:42px;padding:0 11px;border:2px solid;border-radius:5px;line-height:40px}
.t-ent{background:#d6e4f1;border-color:#bbdefb!important;color:#4d7fa1}
.t-sup{background:#e1efe6;border-color:#c8e6c9!important;color:#4f9a80}

/* panel C */
.panel-c{margin:7px 0 0 1px}
.c-body{height:965px;border-top:6px solid #a5a5a5;border-bottom:0;padding:0 16px 0 14px}
.c-strip{height:25px;margin:0 -16px 20px -14px;background:#f4f6fa}
.c-cards{display:grid;grid-template-columns:1011px 1010px;gap:16px;height:459px}
.c-card{border-radius:10px}
.c-head{height:66px;border-bottom:2px solid #dfdfe1;background:#f8f9fb;padding-left:22.500px;line-height:66px;color:#3c3c3c}
.settings{display:grid;grid-template-columns:481.500px 481.500px;grid-template-rows:92px 152px;gap:12px 14px;padding:14px 0 0 16.500px}
.set{border-radius:6px;background:#f9f9f9;padding:0 13.500px;color:#606060}
.set b:not(.slider b){font-weight:700}
.set-line{display:flex;justify-content:space-between;height:53px;line-height:55px}
.set-line span{color:#777}
.set-slide{display:flex;align-items:center;height:39px}
.num-line{display:flex;justify-content:space-between;align-items:center;height:42px;margin-top:10px}
.num{width:84px;height:42px;padding-left:12px;border:2px solid #e4e4e4;border-radius:6px;background:#fff;line-height:40px;color:#222}
.num.five{padding-left:19px}
.set-label{display:block;height:49px;line-height:55px}
.field{height:45px;border:2.500px solid #dedede;border-radius:6px;background:#fff;padding-left:9.500px;line-height:43px;color:#7d7d7d}
.kw{display:flex;gap:5px;width:154px;height:41px;margin-top:7px;padding-left:9px;border:2px solid #bbdefb;border-radius:19px;background:#e6f3fd;line-height:39px;color:#1976d2;white-space:nowrap}
.none{line-height:48px;font-style:italic;color:#999}
.sample-row{display:grid;grid-template-columns:588.500px 374.500px;gap:14px;height:70px;margin:16px 0 0 16.500px}
.sample{display:flex;align-items:center;justify-content:space-between;padding-bottom:6px}
.preview{padding:10px 0 0}
.preview .btn{height:51px;line-height:52px}
.samples{height:340px;margin:28px 26px 0 27px;background:#f8f8f8}
.sample-list{display:flex;flex-direction:column;gap:14px;height:247px;overflow:hidden;border-bottom:2px solid #e6e6e6;padding:14px 21px 0 22px}
.s-item{display:flex;flex:none;align-items:center;gap:17px;height:90px;padding-left:15px;border-radius:6px;background:#fff;box-shadow:0 2px 5px rgba(0,0,0,.06);line-height:32px;white-space:nowrap;font-size:26.450px}
.s-item i{width:40px;height:40px;border-radius:50%;background:#4d7fa1;color:#fff;font-size:22px;line-height:41px;text-align:center;position:relative;top:-1px}
.s-item.last{height:64px}
.s-actions{display:flex;justify-content:center;gap:34px;padding-top:16px}
.s-actions .btn{width:153px;height:59px;line-height:61px}
.s-actions .off{width:168px;background:#b8b8b8}
.perf-head{height:62px;border-bottom:2px solid #e8e8ea;background:#f8f9fb;padding-left:20.500px;line-height:61px;color:#000}
.radars{display:flex;gap:19px;height:393px;padding-left:9px;overflow:hidden}
.radar{flex:none;width:682px;height:400px;background:#fefefe;box-shadow:0 0 4px rgba(0,0,0,.06);overflow:hidden}
.radars .radar:last-child{width:628px}
.axis{font:23px "Open Sans","Noto Sans",sans-serif;fill:#505050}
.key{font:21.500px "Open Sans","Noto Sans",sans-serif;fill:#666}
```
